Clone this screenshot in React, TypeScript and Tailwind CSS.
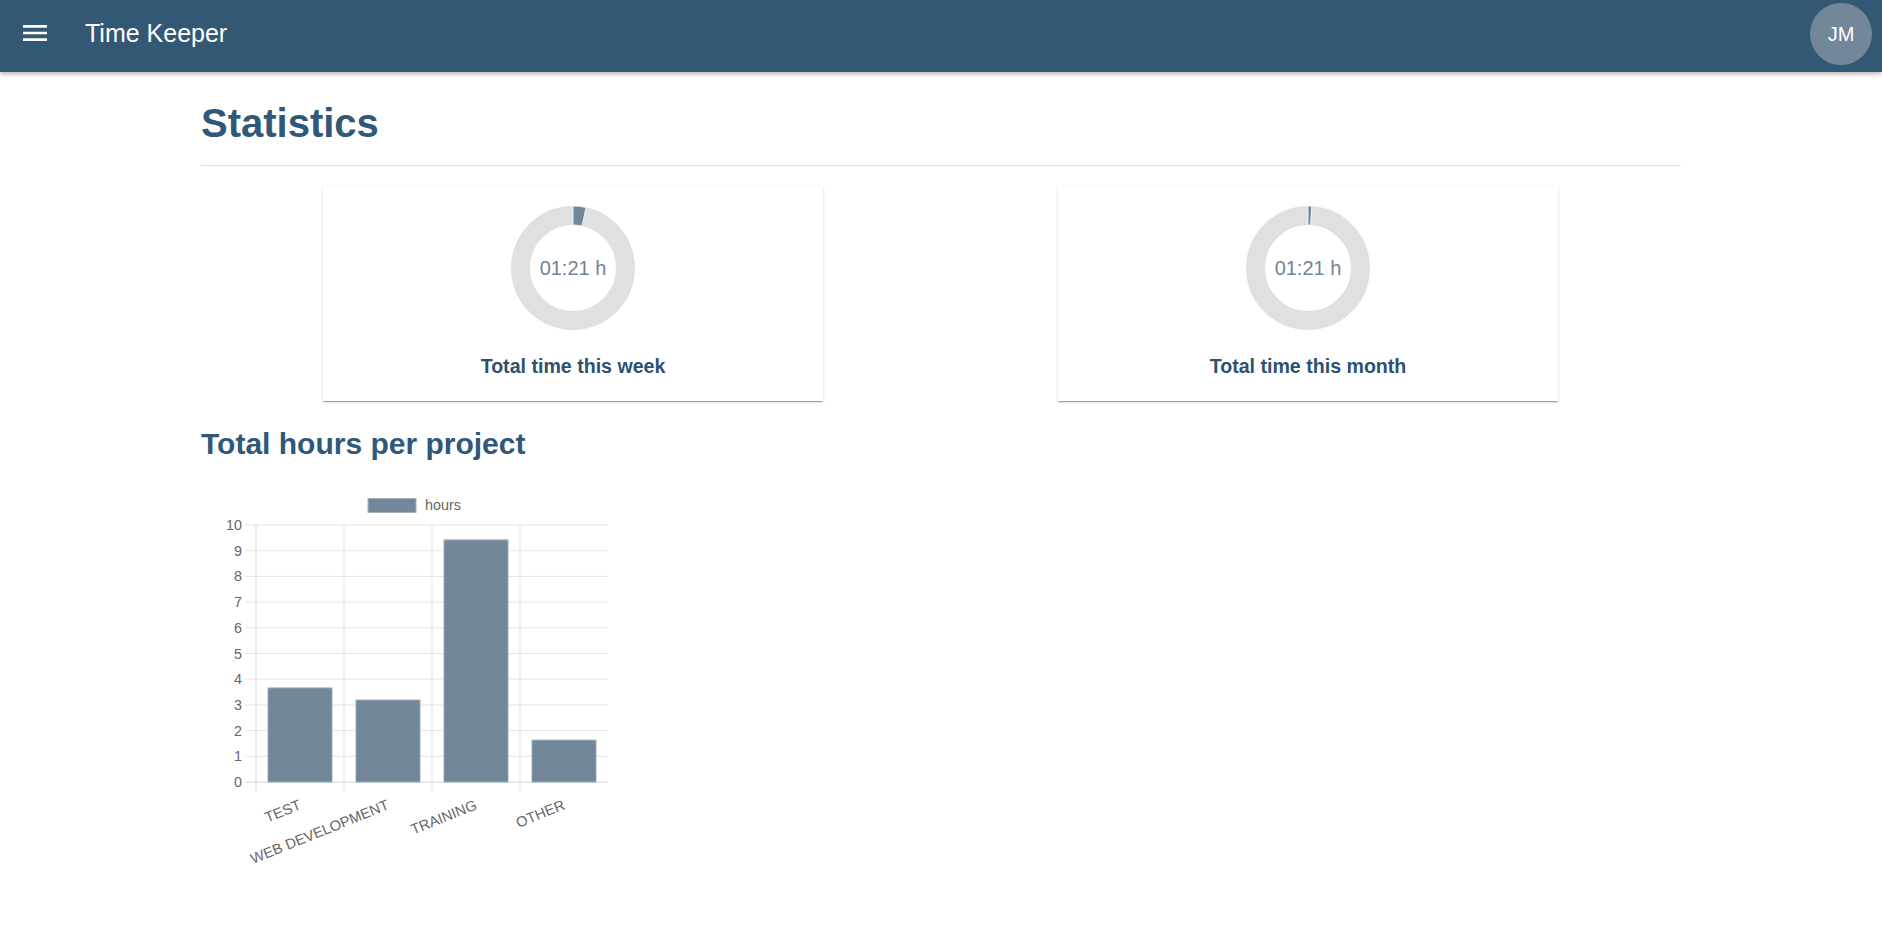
import React from 'react'

const SLATE = '#72879a'

type Point = [number, number]

const polar = (cx: number, cy: number, r: number, deg: number): Point => {
  const a = (deg * Math.PI) / 180
  return [cx + r * Math.sin(a), cy - r * Math.cos(a)]
}

// annular sector, angles measured clockwise from 12 o'clock
const sectorPath = (cx: number, cy: number, r0: number, r1: number, a0: number, a1: number) => {
  const large = a1 - a0 > 180 ? 1 : 0
  const [ox0, oy0] = polar(cx, cy, r1, a0)
  const [ox1, oy1] = polar(cx, cy, r1, a1)
  const [ix1, iy1] = polar(cx, cy, r0, a1)
  const [ix0, iy0] = polar(cx, cy, r0, a0)
  return `M${ox0} ${oy0} A${r1} ${r1} 0 ${large} 1 ${ox1} ${oy1} L${ix1} ${iy1} A${r0} ${r0} 0 ${large} 0 ${ix0} ${iy0} Z`
}

const MenuIcon = () => (
  <svg width="32" height="32" viewBox="0 0 24 24" fill="white">
    <path d="M3 18h18v-2H3v2zm0-5h18v-2H3v2zm0-7v2h18V6H3z" />
  </svg>
)

interface DonutCardProps {
  title: string
  label: string
  fraction: number
}

const DonutCard = ({ title, label, fraction }: DonutCardProps) => {
  const deg = fraction * 360
  return (
    <div className="flex h-[215px] w-[500px] flex-col items-center bg-white pt-[20px] shadow-[0_2px_1px_-1px_rgba(0,0,0,0.2),0_1px_1px_0_rgba(0,0,0,0.14),0_1px_3px_0_rgba(0,0,0,0.12)]">
      <div className="relative h-[124px] w-[124px]">
        <svg width="124" height="124" viewBox="0 0 124 124" className="block">
          <circle cx="62" cy="62" r="52.5" fill="none" stroke="#e0e0e0" strokeWidth="19" />
          <path d={sectorPath(62, 62, 43, 62, 0, deg)} fill={SLATE} stroke="white" strokeWidth="0.8" />
        </svg>
        <div className="absolute inset-0 flex items-center justify-center text-[20px] leading-[24px] text-[#6f8597]">
          {label}
        </div>
      </div>
      <div className="mt-[24px] text-[19.6px] font-bold leading-[24px] text-[#2e5170]">{title}</div>
    </div>
  )
}

const projects = [
  { name: 'TEST', hours: 3.66 },
  { name: 'WEB DEVELOPMENT', hours: 3.19 },
  { name: 'TRAINING', hours: 9.42 },
  { name: 'OTHER', hours: 1.63 },
]

const ProjectChart = () => {
  const x0 = 55
  const cat = 88
  const y0 = 312
  const step = 25.7
  const right = x0 + cat * projects.length
  const ticks = Array.from({ length: 11 }, (_, i) => i)

  return (
    <svg width="430" height="410" viewBox="0 0 430 410" className="mt-[9px] block" fontFamily="'Liberation Sans', Arial, sans-serif">
      {/* legend */}
      <rect x="167" y="28.5" width="48" height="14" fill={SLATE} stroke="#a3b1bd" strokeWidth="1" />
      <text x="224" y="40" fontSize="14.4" fill="#666">hours</text>

      {/* horizontal grid + y ticks */}
      {ticks.map((i) => {
        const y = y0 - i * step
        return (
          <g key={i}>
            <line x1="44" x2={right} y1={y} y2={y} stroke={i === 0 ? 'rgba(0,0,0,0.16)' : 'rgba(0,0,0,0.1)'} strokeWidth="1" />
            <text x="41" y={y + 5} fontSize="14.4" fill="#666" textAnchor="end">{i}</text>
          </g>
        )
      })}

      {/* vertical grid */}
      {projects.map((_, k) => (
        <line key={k} x1={x0 + k * cat} x2={x0 + k * cat} y1={y0 - 10 * step} y2={y0 + 10} stroke={k === 0 ? 'rgba(0,0,0,0.16)' : 'rgba(0,0,0,0.1)'} strokeWidth="1" />
      ))}

      {/* bars */}
      {projects.map((p, k) => {
        const h = p.hours * step
        return (
          <rect key={p.name} x={x0 + k * cat + 12} y={y0 - h} width="64" height={h} fill={SLATE} stroke="#9aaab7" strokeWidth="1" />
        )
      })}

      {/* x labels */}
      {projects.map((p, k) => (
        <text
          key={p.name}
          transform={`translate(${x0 + k * cat + 44} 334) rotate(-22)`}
          textAnchor="end"
          dy="0.35em"
          fontSize="14.6"
          fill="#666"
        >
          {p.name}
        </text>
      ))}
    </svg>
  )
}

export default function App() {
  return (
    <div className="min-h-screen bg-white font-['Liberation_Sans',Arial,sans-serif]">
      <header className="relative z-10 flex h-[72px] items-center bg-[#335874] pb-[6px] shadow-[0_2px_5px_rgba(0,0,0,0.3)]">
        <button type="button" aria-label="Open menu" className="ml-[19px] flex h-[32px] w-[32px] items-center justify-center">
          <MenuIcon />
        </button>
        <span className="ml-[34px] text-[25px] leading-[28px] text-white">Time Keeper</span>
        <div className="ml-auto mr-[10px] mt-[2px] flex h-[62px] w-[62px] items-center justify-center rounded-full bg-[#73879b] text-[20px] text-white">
          JM
        </div>
      </header>

      <main className="mx-auto w-[1480px] pb-[40px]">
        <h1 className="mt-[27px] text-[40px] font-bold leading-[48px] text-[#305878]">Statistics</h1>
        <hr className="mt-[18px] border-t border-[#dedede]" />

        <div className="mt-[20px] flex gap-[235px] pl-[122px]">
          <DonutCard title="Total time this week" label="01:21 h" fraction={0.03375} />
          <DonutCard title="Total time this month" label="01:21 h" fraction={0.0095} />
        </div>

        <h2 className="mt-[26px] text-[30px] font-bold leading-[34px] text-[#305878]">Total hours per project</h2>
        <ProjectChart />
      </main>
    </div>
  )
}
